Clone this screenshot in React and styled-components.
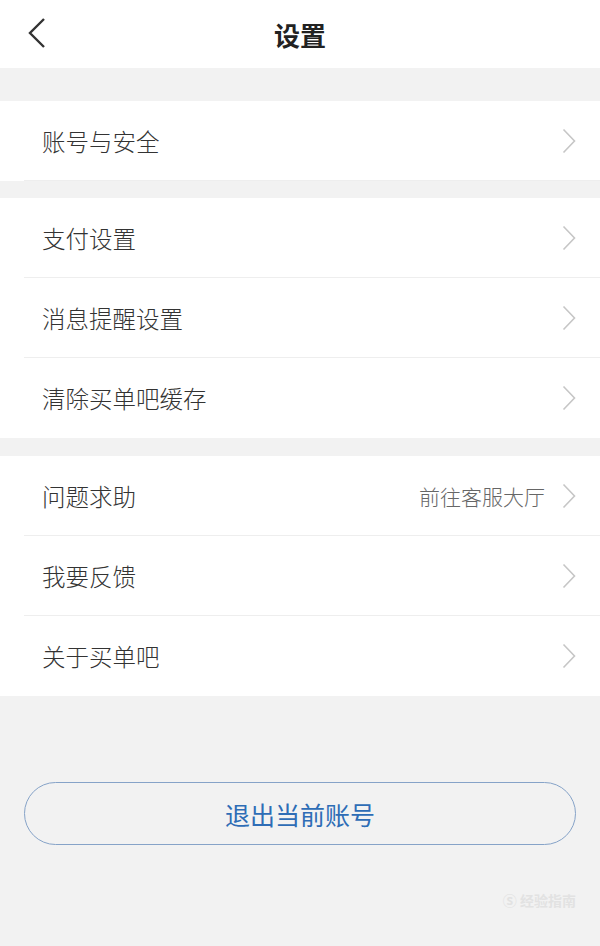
import React from 'react';
import styled, { createGlobalStyle } from 'styled-components';

const GlobalStyle = createGlobalStyle`
  html, body {
    margin: 0;
    padding: 0;
    background: #f2f2f2;
  }
  body {
    font-family: "Noto Sans CJK SC", "Noto Sans", sans-serif;
  }
`;

const Page = styled.div`
  position: relative;
  width: 600px;
  min-height: 946px;
  background: #f2f2f2;
`;

const Header = styled.div`
  height: 68px;
  background: #fff;
  display: flex;
  align-items: center;
  justify-content: center;
  position: relative;
`;

const BackButton = styled.div`
  position: absolute;
  left: 26px;
  top: 17px;
  width: 22px;
  height: 32px;
  display: flex;
`;

const Title = styled.div`
  font-size: 26px;
  font-weight: 700;
  color: #222;
`;

const Group = styled.div`
  background: #fff;
  margin-top: ${(p) => p.gap}px;
`;

const Row = styled.div`
  height: 80px;
  margin-left: 24px;
  padding: 0 24px 0 18px;
  display: flex;
  align-items: center;
  border-bottom: ${(p) => (p.last ? 'none' : '1px solid #eeeeee')};
  box-sizing: border-box;
`;

const Label = styled.div`
  flex: 1;
  font-size: 23.5px;
  font-weight: 300;
  color: #333;
`;

const Hint = styled.div`
  font-size: 21px;
  font-weight: 300;
  color: #666;
  margin-right: 17px;
`;

const LogoutWrap = styled.div`
  padding: 86px 24px 0;
`;

const LogoutButton = styled.div`
  height: 63px;
  border: 1px solid #86a3c8;
  border-radius: 32px;
  box-sizing: border-box;
  display: flex;
  align-items: center;
  justify-content: center;
  font-size: 25px;
  color: #2e6db6;
`;

const Watermark = styled.div`
  position: absolute;
  right: 24px;
  bottom: 36px;
  color: #e2e2e2;
  font-size: 14px;
  font-weight: 700;
`;

const Chevron = () => (
  <svg width="14" height="26" viewBox="0 0 14 26">
    <path d="M1.5 1.5 L12.5 13 L1.5 24.5" fill="none" stroke="#c6c6c6" strokeWidth="1.6" />
  </svg>
);

const groups = [
  { gap: 33, items: [{ label: '账号与安全' }] },
  { gap: 17, items: [{ label: '支付设置' }, { label: '消息提醒设置' }, { label: '清除买单吧缓存' }] },
  { gap: 18, items: [{ label: '问题求助', hint: '前往客服大厅' }, { label: '我要反馈' }, { label: '关于买单吧' }] },
];

export default function App() {
  return (
    <Page>
      <GlobalStyle />
      <Header>
        <BackButton>
          <svg width="22" height="32" viewBox="0 0 22 32">
            <path d="M18 2 L4 16 L18 30" fill="none" stroke="#333" strokeWidth="2.4" />
          </svg>
        </BackButton>
        <Title>设置</Title>
      </Header>
      {groups.map((g, gi) => (
        <Group key={gi} gap={g.gap}>
          {g.items.map((item, i) => (
            <Row key={item.label} last={i === g.items.length - 1 && gi !== 0}>
              <Label>{item.label}</Label>
              {item.hint && <Hint>{item.hint}</Hint>}
              <Chevron />
            </Row>
          ))}
        </Group>
      ))}
      <LogoutWrap>
        <LogoutButton>退出当前账号</LogoutButton>
      </LogoutWrap>
      <Watermark>Ⓢ 经验指南</Watermark>
    </Page>
  );
}
